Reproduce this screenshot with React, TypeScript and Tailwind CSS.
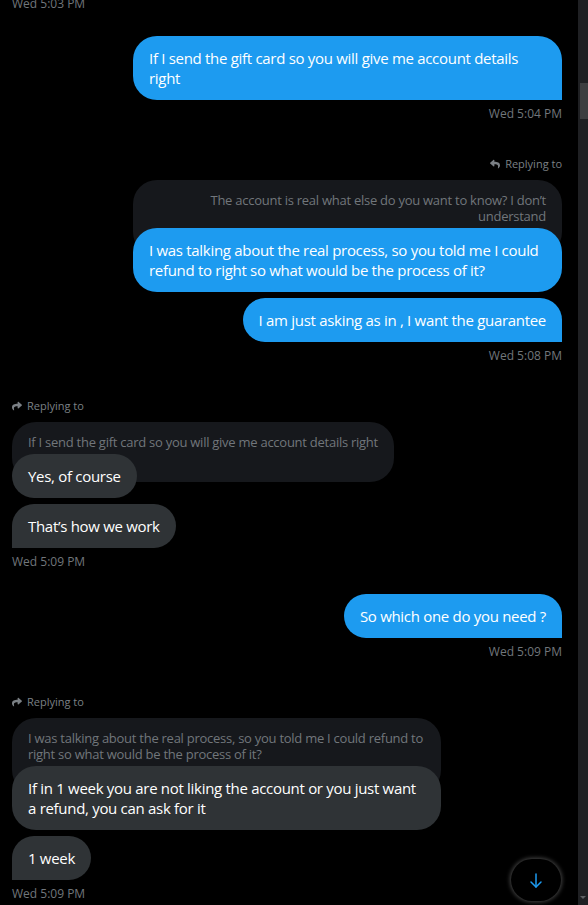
import React from "react";
import { FaReply, FaShare } from "react-icons/fa";

type Side = "left" | "right";

function Stamp({ side, text, className = "" }: { side: Side; text: string; className?: string }) {
  return (
    <div
      className={`h-4 text-[12px] leading-4 text-[#71767b] ${side === "right" ? "text-right" : "text-left"} ${className}`}
    >
      {text}
    </div>
  );
}

function Replying({ side }: { side: Side }) {
  return (
    <div className={`mt-[34px] flex h-4 items-center gap-[5px] text-[11px] leading-4 text-[#7b8085] ${side === "right" ? "justify-end" : "justify-start"}`}>
      {side === "right" ? <FaReply size={10} /> : <FaShare size={10} />}
      <span>Replying to</span>
    </div>
  );
}

function Quote({ side, lines }: { side: Side; lines: string[] }) {
  const multi = lines.length > 1;
  return (
    <div className={`mt-2 flex ${side === "right" ? "justify-end" : "justify-start"}`}>
      <div
        className={`rounded-[24px] bg-[#16181c] px-4 pt-3 pb-8 text-[13px] leading-4 tracking-[-0.02em] text-[#71767b] ${side === "right" ? "text-right" : "text-left"} ${multi ? "w-[429px]" : ""}`}
      >
        {lines.map((l, i) => (
          <div key={i} className="whitespace-nowrap">{l}</div>
        ))}
      </div>
    </div>
  );
}

function Bubble({
  side,
  lines,
  last,
  className = "",
}: {
  side: Side;
  lines: string[];
  last?: boolean;
  className?: string;
}) {
  const multi = lines.length > 1;
  const color = side === "right" ? "bg-[#1d9bf0]" : "bg-[#2f3336]";
  const corner = last ? (side === "right" ? "rounded-br-none" : "rounded-bl-none") : "";
  return (
    <div className={`flex ${side === "right" ? "justify-end" : "justify-start"} ${className}`}>
      <div
        className={`rounded-[24px] ${corner} ${color} px-4 py-3 text-[15px] leading-5 tracking-[-0.02em] text-white ${multi ? "w-[429px]" : ""}`}
      >
        {lines.map((l, i) => (
          <div key={i} className="whitespace-nowrap">{l}</div>
        ))}
      </div>
    </div>
  );
}

export default function App() {
  return (
    <div className="flex h-[905px] w-[588px] overflow-hidden bg-black font-['Open_Sans',_'Noto_Sans',_sans-serif]">
      <div className="relative flex-1 overflow-hidden">
        <div className="-mt-[4px] flex flex-col pl-3 pr-4">
          <Stamp side="left" text="Wed 5:03 PM" />

          <Bubble
            side="right"
            last
            className="mt-6"
            lines={["If I send the gift card so you will give me account details", "right"]}
          />
          <Stamp side="right" text="Wed 5:04 PM" className="mt-1.5" />

          <Replying side="right" />
          <Quote side="right" lines={["The account is real what else do you want to know? I don’t", "understand"]} />
          <Bubble
            side="right"
            className="-mt-7"
            lines={["I was talking about the real process, so you told me I could", "refund to right so what would be the process of it?"]}
          />
          <Bubble side="right" last className="mt-1.5" lines={["I am just asking as in , I want the guarantee"]} />
          <Stamp side="right" text="Wed 5:08 PM" className="mt-1.5" />

          <Replying side="left" />
          <Quote side="left" lines={["If I send the gift card so you will give me account details right"]} />
          <Bubble side="left" className="-mt-7" lines={["Yes, of course"]} />
          <Bubble side="left" last className="mt-1.5" lines={["That’s how we work"]} />
          <Stamp side="left" text="Wed 5:09 PM" className="mt-1.5" />

          <Bubble side="right" last className="mt-6" lines={["So which one do you need ?"]} />
          <Stamp side="right" text="Wed 5:09 PM" className="mt-1.5" />

          <Replying side="left" />
          <Quote
            side="left"
            lines={["I was talking about the real process, so you told me I could refund to", "right so what would be the process of it?"]}
          />
          <Bubble
            side="left"
            className="-mt-7"
            lines={["If in 1 week you are not liking the account or you just want", "a refund, you can ask for it"]}
          />
          <Bubble side="left" last className="mt-1.5" lines={["1 week"]} />
          <Stamp side="left" text="Wed 5:09 PM" className="mt-1.5" />
        </div>

        <button className="absolute left-[511px] top-[859px] flex h-[42px] w-[50px] items-center justify-center rounded-full bg-black shadow-[0_0_4px_1px_rgba(255,255,255,0.28)]">
          <svg width="12" height="15" viewBox="0 0 12 15" fill="none" stroke="#1d9bf0" strokeWidth="1.5" strokeLinecap="round" strokeLinejoin="round">
            <line x1="6" y1="1" x2="6" y2="14" />
            <polyline points="1,9 6,14 11,9" />
          </svg>
        </button>
      </div>

      <div className="flex w-[10px] flex-col bg-[#1f2023]">
        <div className="ml-[2px] mt-[83px] h-[36px] bg-[#3d3e40]" />
        <div className="flex-1" />
        <div className="mb-[6px] flex justify-center">
          <div className="h-0 w-0 border-x-[3px] border-t-[3px] border-x-transparent border-t-[#5f6164]" />
        </div>
      </div>
    </div>
  );
}
